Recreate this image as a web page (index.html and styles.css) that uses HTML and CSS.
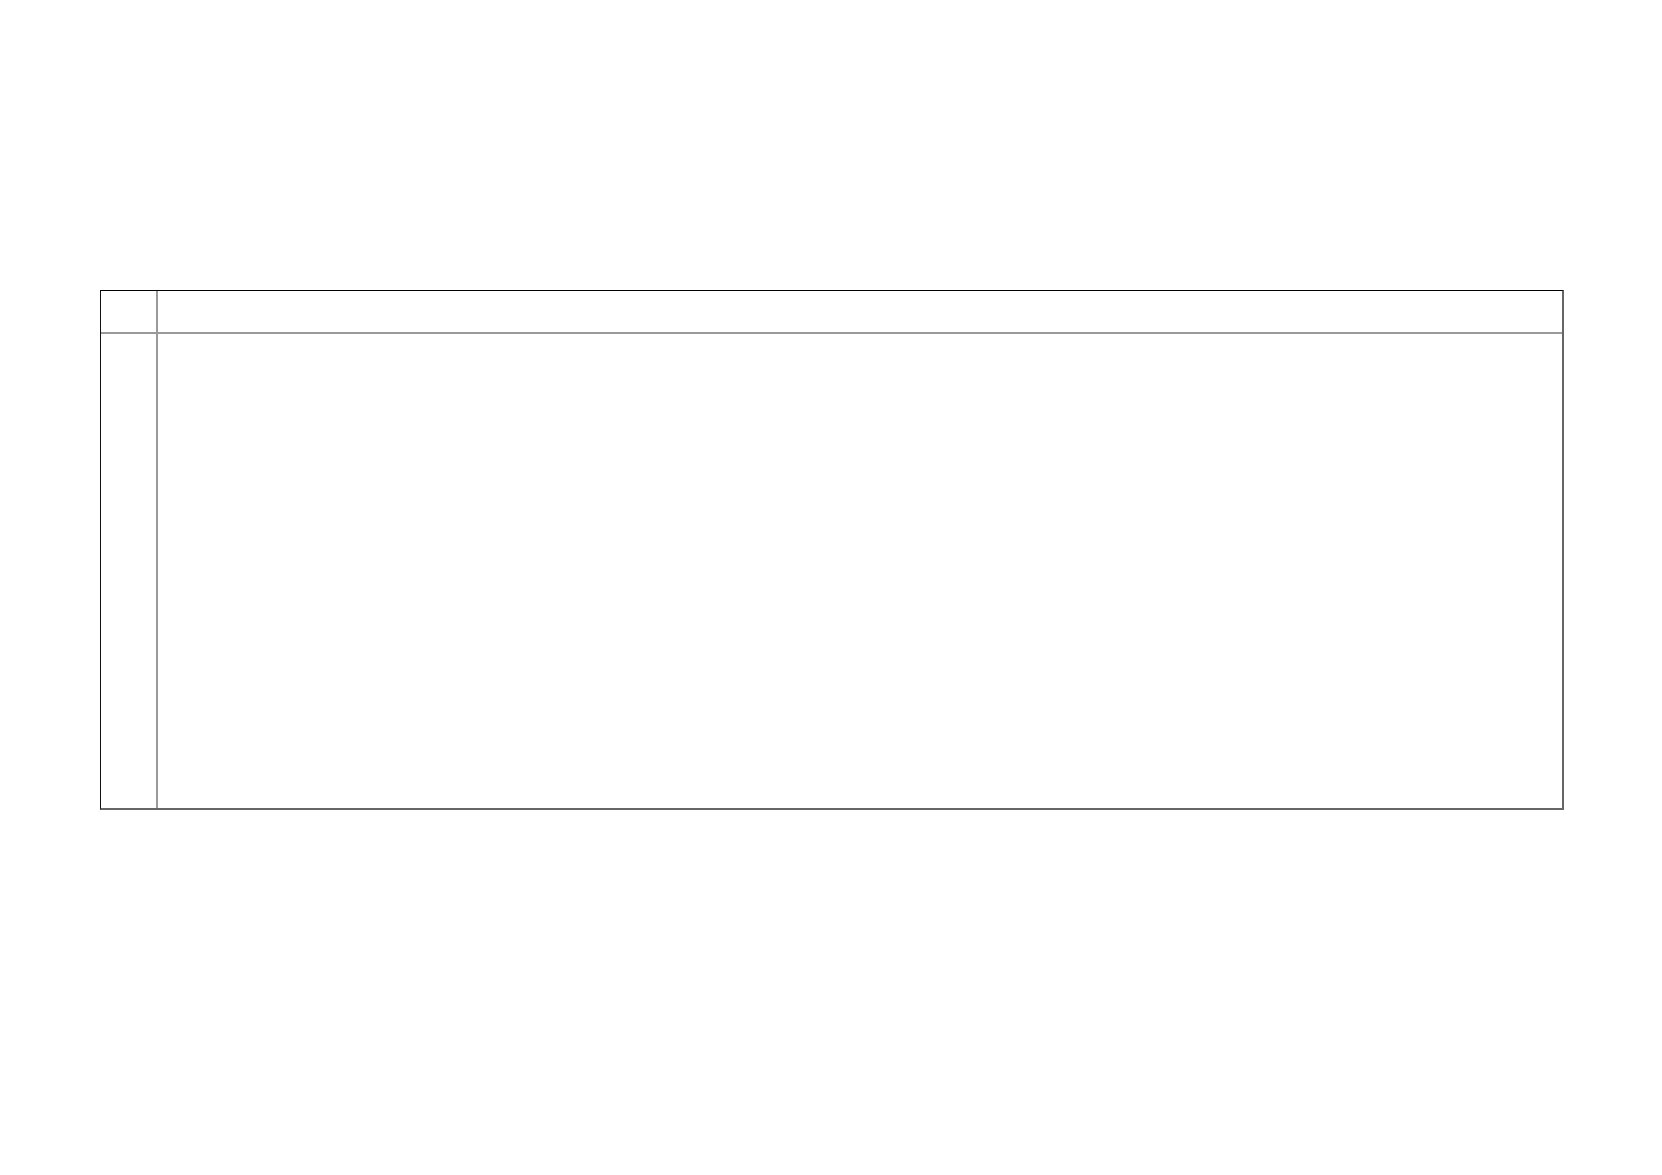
FILE: index.html
```html
<!DOCTYPE html>
<html lang="en">
<head>
  <meta charset="UTF-8" />
  <meta name="viewport" content="width=device-width, initial-scale=1.0"/>
  <title>Sheet</title>
  <link rel="stylesheet" href="styles.css">
</head>
<body>
  <div class="page">
    <!-- Empty table frame -->
    <div class="sheet">
      <div class="cell corner"></div>
      <div class="cell head"></div>
      <div class="cell side"></div>
      <div class="cell body"></div>
    </div>
  </div>
</body>
</html>
```
FILE: styles.css
```css
/* Global Reset */
* { margin: 0; padding: 0; box-sizing: border-box; }
html, body { height: 100%; font-family: "Liberation Sans", sans-serif; background: #fff; }
/* Page */
.page {
  padding: 290px 98px 0 100px;
}
/* Table frame */
.sheet {
  display: grid;
  grid-template-columns: 57px 1fr;
  grid-template-rows: 43px 1fr;
  height: 520px;
  border-top: 1px solid #000;
  border-left: 1px solid #111;
  border-right: 2px solid #666;
  border-bottom: 2px solid #666;
}
.cell { background: #fff; }
.corner, .side { border-right: 2px solid #9a9a9a; }
.corner, .head { border-bottom: 2px solid #9a9a9a; }
```
